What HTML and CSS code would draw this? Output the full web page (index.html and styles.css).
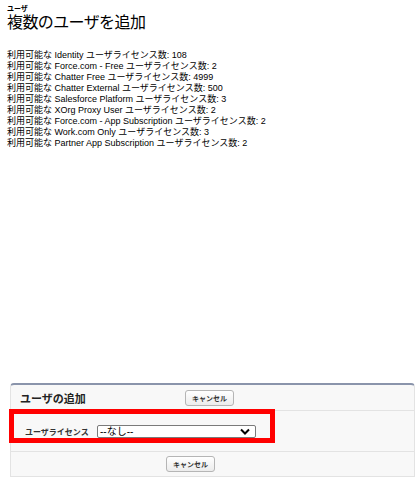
FILE: index.html
```html
<!DOCTYPE html>
<html lang="ja">

<head>
    <meta charset="UTF-8">
    <title>複数のユーザを追加</title>
    <link rel="stylesheet" href="styles.css">
</head>

<body>
    <div class="page-head">
        <div class="type">ユーザ</div>
        <h1>複数のユーザを追加</h1>
    </div>

    <div class="counts">
        <div>利用可能な Identity ユーザライセンス数: 108</div>
        <div>利用可能な Force.com - Free ユーザライセンス数: 2</div>
        <div>利用可能な Chatter Free ユーザライセンス数: 4999</div>
        <div>利用可能な Chatter External ユーザライセンス数: 500</div>
        <div>利用可能な Salesforce Platform ユーザライセンス数: 3</div>
        <div>利用可能な XOrg Proxy User ユーザライセンス数: 2</div>
        <div>利用可能な Force.com - App Subscription ユーザライセンス数: 2</div>
        <div>利用可能な Work.com Only ユーザライセンス数: 3</div>
        <div>利用可能な Partner App Subscription ユーザライセンス数: 2</div>
    </div>

    <div class="block">
        <div class="block-head">
            <h2>ユーザの追加</h2>
            <button type="button" class="btn">キャンセル</button>
        </div>
        <div class="block-body">
            <label for="license">ユーザライセンス</label>
            <div class="select">
                <span>--なし--</span>
                <svg width="10" height="7" viewBox="0 0 10 7"><path d="M1 1.5 L5 5.5 L9 1.5" fill="none" stroke="#000" stroke-width="2"/></svg>
            </div>
        </div>
        <div class="block-foot">
            <button type="button" class="btn">キャンセル</button>
        </div>
        <div class="highlight"></div>
    </div>
</body>

</html>
```

FILE: styles.css
```css
body {
    margin: 0;
    padding: 4px 7px 0;
    background-color: white;
    color: #000;
    font-family: "Liberation Sans", "Noto Sans CJK JP", sans-serif;
}

.type {
    font-size: 7px;
    font-weight: bold;
    line-height: 9px;
}

h1 {
    margin: 0;
    font-size: 16px;
    font-weight: normal;
    line-height: 19px;
    letter-spacing: -0.6px;
}

.counts {
    margin-top: 18px;
    font-size: 9px;
    line-height: 11px;
}

.block {
    position: relative;
    margin: 234px 0 0 3px;
    width: 403px;
    background-color: #f8f8f8;
    border: 1px solid #e3e3e3;
    border-top: 2px solid #8a94ab;
    border-radius: 4px 4px 0 0;
}

.block-head {
    display: flex;
    align-items: center;
    height: 25px;
    border-bottom: 1px solid #e3e3e3;
}

h2 {
    margin: 0;
    width: 165px;
    padding-left: 9px;
    font-size: 11px;
    font-weight: bold;
    color: #222;
}

.btn {
    width: 49px;
    height: 16px;
    padding: 0;
    font-family: inherit;
    font-size: 7px;
    font-weight: bold;
    color: #333;
    background: linear-gradient(#ffffff, #ececec);
    border: 1px solid #b5b5b5;
    border-radius: 3px;
}

.block-body {
    display: flex;
    align-items: center;
    height: 40px;
    border-bottom: 1px solid #e3e3e3;
}

label {
    width: 72px;
    padding-left: 14px;
    font-size: 8px;
    font-weight: bold;
    color: #333;
}

.select {
    display: flex;
    align-items: center;
    justify-content: space-between;
    box-sizing: border-box;
    width: 159px;
    height: 13px;
    padding: 0 5px 0 2px;
    background-color: white;
    border: 1px solid #7a7a7a;
    border-radius: 2px;
    font-size: 10px;
    line-height: 11px;
}

.block-foot {
    display: flex;
    align-items: center;
    height: 24px;
    padding-left: 155px;
}

.highlight {
    position: absolute;
    left: -2px;
    top: 24px;
    width: 266px;
    height: 34px;
    box-sizing: border-box;
    border: 5px solid #ff0000;
}
```
